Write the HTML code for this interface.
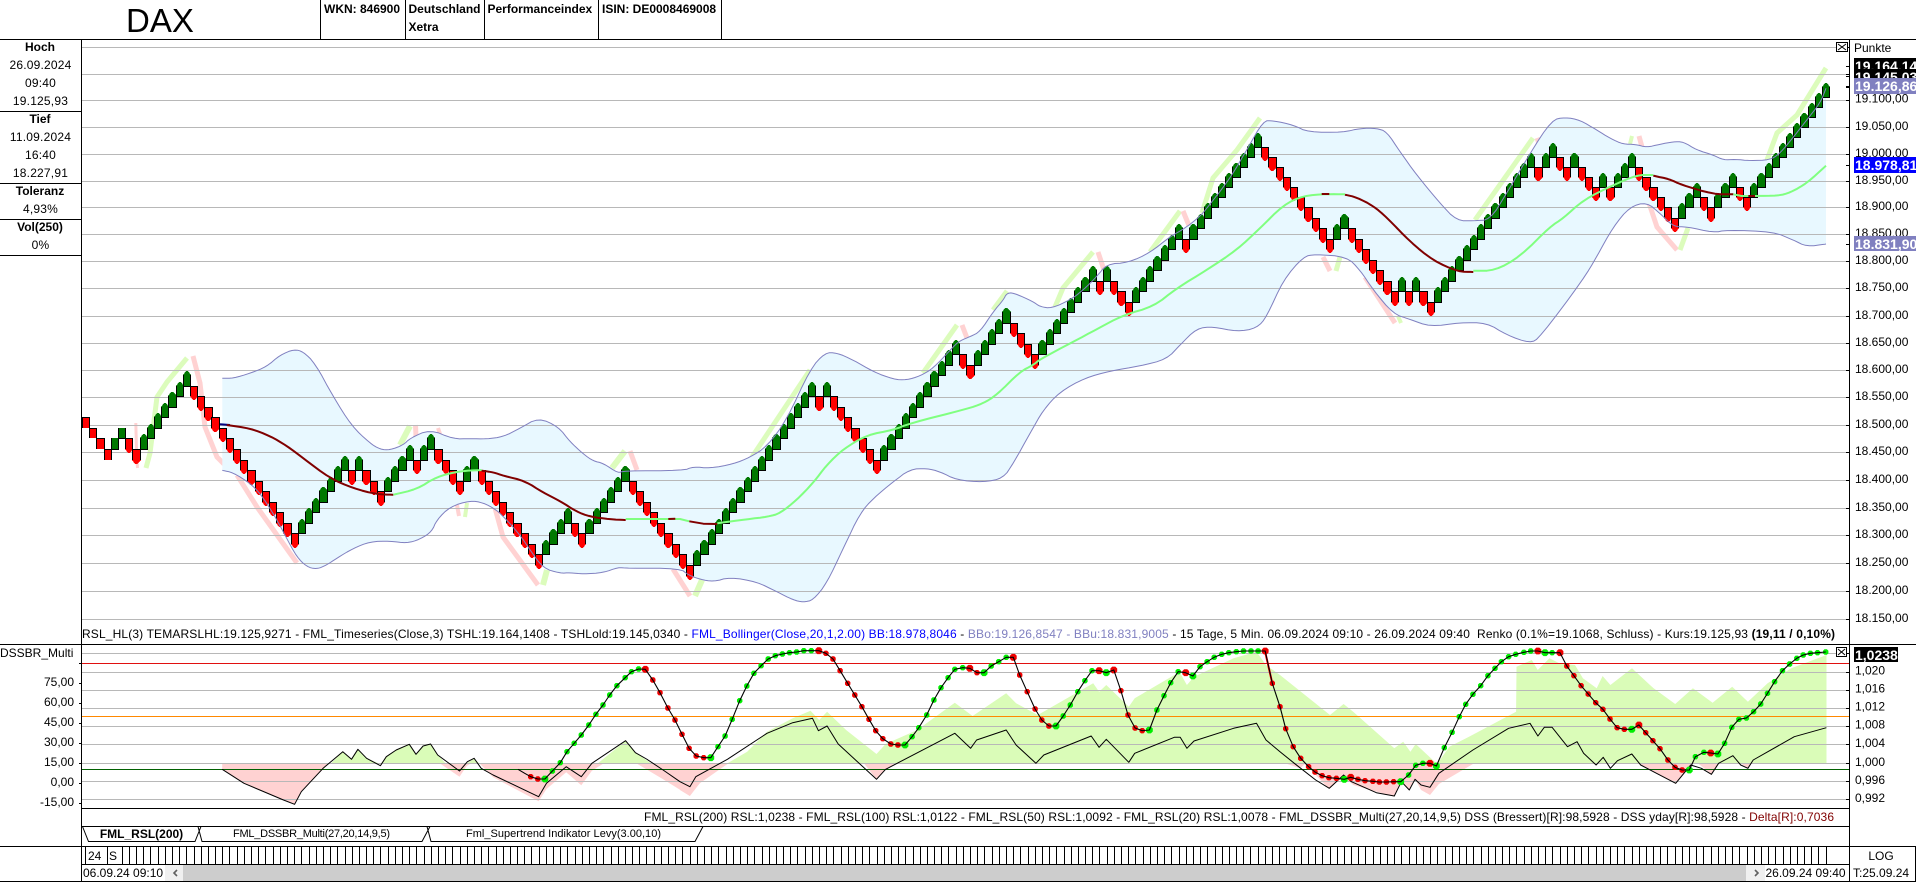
<!DOCTYPE html>
<html lang="de">
<head>
<meta charset="utf-8">
<title>DAX</title>
<style>
html,body{margin:0;padding:0;background:#fff;width:1916px;height:882px;overflow:hidden}
svg{display:block}
text{font-family:"Liberation Sans",Arial,sans-serif;font-size:12px;fill:#000;white-space:pre}
.b{font-weight:bold}
.m{text-anchor:middle}
.e{text-anchor:end}
.w{font-size:14px;font-weight:bold;fill:#fff}
.s{letter-spacing:.2px}
</style>
</head>
<body>
<svg xmlns="http://www.w3.org/2000/svg" width="1916" height="882" viewBox="0 0 1916 882">
<defs>
<clipPath id="mc"><rect x="82" y="40" width="1767" height="604"/></clipPath>
<clipPath id="sc"><rect x="82" y="645" width="1767" height="163"/></clipPath>
</defs>
<rect width="1916" height="882" fill="#fff"/>
<g id="c"></g>

<!-- header -->
<text x="126" y="32" style="font-size:33px">DAX</text>
<text x="324" y="13" class="b">WKN: 846900</text>
<text x="408.5" y="13" class="b">Deutschland</text>
<text x="408.5" y="31" class="b">Xetra</text>
<text x="487.5" y="13" class="b">Performanceindex</text>
<text x="602" y="13" class="b">ISIN: DE0008469008</text>

<!-- left panel -->
<text x="40" y="51" class="b m">Hoch</text>
<text x="40.5" y="69" class="m s">26.09.2024</text>
<text x="40.5" y="87" class="m s">09:40</text>
<text x="40.5" y="105" class="m s">19.125,93</text>
<text x="40" y="123" class="b m">Tief</text>
<text x="40.5" y="141" class="m s">11.09.2024</text>
<text x="40.5" y="159" class="m s">16:40</text>
<text x="40.5" y="177" class="m s">18.227,91</text>
<text x="40" y="195" class="b m">Toleranz</text>
<text x="40.5" y="213" class="m s">4,93%</text>
<text x="40" y="231" class="b m">Vol(250)</text>
<text x="40.5" y="249" class="m s">0%</text>

<!-- main axis -->
<text x="1854" y="52">Punkte</text>
<text x="1855" y="102.5">19.100,00</text>
<text x="1855" y="130">19.050,00</text>
<text x="1855" y="157">19.000,00</text>
<text x="1855" y="184">18.950,00</text>
<text x="1855" y="210">18.900,00</text>
<text x="1855" y="237">18.850,00</text>
<text x="1855" y="264">18.800,00</text>
<text x="1855" y="291">18.750,00</text>
<text x="1855" y="319">18.700,00</text>
<text x="1855" y="346">18.650,00</text>
<text x="1855" y="373">18.600,00</text>
<text x="1855" y="400">18.550,00</text>
<text x="1855" y="428">18.500,00</text>
<text x="1855" y="455">18.450,00</text>
<text x="1855" y="483">18.400,00</text>
<text x="1855" y="511">18.350,00</text>
<text x="1855" y="538">18.300,00</text>
<text x="1855" y="566">18.250,00</text>
<text x="1855" y="594">18.200,00</text>
<text x="1855" y="622">18.150,00</text>

<rect x="1854" y="58" width="62" height="14" fill="#000"/>
<text x="1855" y="71" class="w">19.164,14</text>
<rect x="1854" y="69" width="62" height="10" fill="#000"/>
<text x="1855" y="82" class="w">19.145,03</text>
<rect x="1854" y="78" width="62" height="16" fill="#8080c0"/>
<text x="1855" y="91" class="w">19.126,86</text>
<rect x="1854" y="157" width="62" height="16" fill="#0000ff"/>
<text x="1855" y="170" class="w">18.978,81</text>
<rect x="1854" y="236" width="62" height="15" fill="#8080c0"/>
<text x="1855" y="249" class="w">18.831,90</text>

<!-- close boxes -->
<rect x="1836.5" y="42.5" width="11" height="9" fill="#fff" stroke="#000"/>
<path d="M1838 44l8 6M1846 44l-8 6" stroke="#000" fill="none"/>
<rect x="1836.5" y="647.5" width="10" height="9" fill="#fff" stroke="#000"/>
<path d="M1838 649l7 6M1845 649l-7 6" stroke="#000" fill="none"/>

<!-- info line -->
<text x="82" y="638" textLength="1753" lengthAdjust="spacing">RSL_HL(3) TEMARSLHL:19.125,9271 - FML_Timeseries(Close,3) TSHL:19.164,1408 - TSHLold:19.145,0340 - <tspan fill="#0000ff" style="fill:#0000ff">FML_Bollinger(Close,20,1,2.00) BB:18.978,8046</tspan> - <tspan style="fill:#8080c0">BBo:19.126,8547 - BBu:18.831,9005</tspan> - 15 Tage, 5 Min. 06.09.2024 09:10 - 26.09.2024 09:40  Renko (0.1%=19.1068, Schluss) - Kurs:19.125,93 <tspan class="b">(19,11 / 0,10%)</tspan></text>

<!-- sub chart labels -->
<text x="0" y="657">DSSBR_Multi</text>
<text x="74" y="686" class="e">75,00</text>
<text x="74" y="706" class="e">60,00</text>
<text x="74" y="726" class="e">45,00</text>
<text x="74" y="746" class="e">30,00</text>
<text x="74" y="766" class="e">15,00</text>
<text x="74" y="786" class="e">0,00</text>
<text x="74" y="806" class="e">-15,00</text>

<rect x="1854" y="647" width="44" height="15" fill="#000"/>
<text x="1855" y="660" class="w">1,0238</text>
<text x="1855" y="674.5">1,020</text>
<text x="1855" y="692.5">1,016</text>
<text x="1855" y="710.5">1,012</text>
<text x="1855" y="728.5">1,008</text>
<text x="1855" y="747">1,004</text>
<text x="1855" y="766">1,000</text>
<text x="1855" y="784">0,996</text>
<text x="1855" y="802">0,992</text>

<!-- legend -->
<text x="644" y="821" textLength="1190" lengthAdjust="spacing">FML_RSL(200) RSL:1,0238 - FML_RSL(100) RSL:1,0122 - FML_RSL(50) RSL:1,0092 - FML_RSL(20) RSL:1,0078 - FML_DSSBR_Multi(27,20,14,9,5) DSS (Bressert)[R]:98,5928 - DSS yday[R]:98,5928 - <tspan style="fill:#800000">Delta[R]:0,7036</tspan></text>

<!-- tabs -->
<path d="M82.5 826.5L88.5 841.5H195L201 826.5M198 826.5L202 841.5H422L430 826.5M427 826.5L431 841.5H695L703 826.5" fill="none" stroke="#000"/>
<text x="141.5" y="838" class="b m">FML_RSL(200)</text>
<text x="233" y="837" style="font-size:11px" textLength="157" lengthAdjust="spacing">FML_DSSBR_Multi(27,20,14,9,5)</text>
<text x="466" y="837" style="font-size:11px" textLength="195" lengthAdjust="spacing">Fml_Supertrend Indikator Levy(3.00,10)</text>

<!-- time axis -->
<text x="88" y="860">24</text>
<text x="109" y="860">S</text>
<text x="83" y="877">06.09.24 09:10</text>
<text x="1765.5" y="877">26.09.24 09:40</text>
<text x="1881" y="860" class="m">LOG</text>
<text x="1853" y="877">T:25.09.24</text>
</svg>

<script>
(function(){
var o='';
function P(ox,oy,sx,a){var r=[];for(var i=0;i<a.length;i++){r.push((ox+a[i][0]/sx).toFixed(1)+','+(oy+a[i][1]/3).toFixed(1));}return r;}
var z5=function(a){return P(70,330,3,a)},z6=function(a){return P(560,300,3,a)},z7=function(a){return P(1040,100,3,a)},
z8=function(a){return P(1440,50,3,a)},z12=function(a){return P(560,120,3,a)},
z9=function(a){return P(70,640,2.529,a)},z10=function(a){return P(680,640,2.529,a)},z11=function(a){return P(1280,640,2.8,a)},z4=function(a){return P(1300,600,2.545,a)};
function hl(y,a,b,c){return '<rect x="'+a+'" y="'+y+'" width="'+(b-a)+'" height="1" fill="'+(c||'#000')+'"/>';}
function vl(x,a,b,c){return '<rect x="'+x+'" y="'+a+'" width="1" height="'+(b-a)+'" fill="'+(c||'#000')+'"/>';}
function pl(p,c,w){return '<polyline points="'+p.join(' ')+'" fill="none" stroke="'+c+'" stroke-width="'+w+'" stroke-linejoin="round"/>';}
function pg(p,c){return '<polygon points="'+p.join(' ')+'" fill="'+c+'"/>';}
/* Chaikin corner cutting for smooth curves; endpoints are preserved */
function sm(p,n){
 var a=p.map(function(s){var t=s.split(',');return [+t[0],+t[1]];});
 for(var k=0;k<(n||2);k++){
  var b=[a[0]];
  for(var i=0;i<a.length-1;i++){
   b.push([a[i][0]*.75+a[i+1][0]*.25,a[i][1]*.75+a[i+1][1]*.25]);
   b.push([a[i][0]*.25+a[i+1][0]*.75,a[i][1]*.25+a[i+1][1]*.75]);
  }
  b.push(a[a.length-1]);a=b;
 }
 return a.map(function(q){return q[0].toFixed(1)+','+q[1].toFixed(1);});
}

var G='#dcfcbc',K='#ffd2d2';
/* main chart */
o+='<g clip-path="url(#mc)">';
var st=[
[G,[[146,468],[150,453],[157,397],[167,382],[187,358]],5],
[K,[[193,356],[200,383],[205,427],[217,457],[224,464]],5],
[K,[[135.8,423],[136.5,450],[137.5,468]],3],
[K,[[237,475],[257,507],[297,563]],5],
[G,[[400,445],[410,426]],6],[K,[[415.5,425],[416,437]],5],[K,[[438,428],[440,434]],4],
[K,[[457,505],[459,516]],4],[G,[[467,503],[465,517]],4],
[K,[[495,508],[503,537],[538,585]],5],[G,[[547,570],[543,585]],6],
[G,[[612,468],[625,451]],6],[K,[[630,451],[637,470]],5],
[K,[[673,569],[690,596]],5],[G,[[702,580],[695,596]],6],
[G,[[752,457],[810,370]],5],
[G,[[923,373],[957,325]],5],[K,[[962,325],[967,338]],5],
[G,[[993,310],[1007,291]],5],
[G,[[1055,307],[1063,288],[1093,252]],5],[K,[[1098,252],[1104,270]],5],
[G,[[1150,252],[1180,211]],5],[K,[[1183,211],[1190,228]],5],
[G,[[1202,213],[1213,178],[1237,150],[1260,118]],5],
[K,[[1323,257],[1330,271]],5],[G,[[1340,257],[1336,271]],5],
[K,[[1365,277],[1395,323]],5],[G,[[1398,316],[1401,323]],4],
[G,[[1475,220],[1533,138]],5],[K,[[1537,138],[1540,146]],5],
[G,[[1632,136],[1630,144]],4],[K,[[1639,136],[1642,147]],5],
[K,[[1649,203],[1657,227],[1677,250]],5],[G,[[1688,228],[1680,250]],5],
[G,[[1767,160],[1777,133],[1797,115],[1826,68]],5]
];
st.forEach(function(s){o+='<polyline points="'+s[1].map(function(p){return p.join(',')}).join(' ')+'" fill="none" stroke="'+s[0]+'" stroke-width="'+s[2]+'"/>';});

var up=sm([].concat(
z5([[457,145],[490,145],[540,130],[590,110],[630,75],[672,58],[700,65],[735,100],[790,200],[845,288],[900,340],[930,358],[960,360],[1000,345],[1020,325],[1080,298],[1150,327],[1200,326],[1250,327],[1300,320],[1350,295],[1405,263],[1465,290]]),
z6([[30,425],[70,462],[100,483],[130,490],[175,520],[190,512],[370,512],[400,500],[450,505],[520,492],[570,472],[620,440],[680,360],[750,208],[795,158],[830,158],[880,180],[940,215],[1000,238],[1040,240],[1080,228],[1120,205],[1180,140],[1200,122],[1230,110],[1260,95],[1300,35],[1330,0]]),
z12([[1340,520],[1360,518],[1420,545]]),
z7([[0,620],[35,625],[90,600],[130,570],[170,530],[200,492],[265,488],[330,458],[390,410],[430,388],[480,350],[520,300],[570,235],[620,150],[670,62],[700,62],[760,75],[805,97],[910,97],[960,85],[1010,85],[1040,95],[1080,155],[1130,225]]),
z8([[0,460],[50,512],[100,512],[150,510],[200,430],[270,310],[335,210],[375,202],[420,210],[470,240],[510,265],[550,283],[585,283],[620,292],[660,283],[700,275],[730,275],[770,300],[820,315],[850,330],[885,328],[930,332],[990,330],[1020,310],[1060,262],[1100,210],[1140,160],[1158,115]])
));
var lo=sm([].concat(
z5([[457,421],[490,428],[540,460],[570,490],[610,550],[650,625],[680,680],[710,710],[740,718],[770,705],[800,685],[850,655],[900,635],[960,633],[1010,640],[1050,628],[1085,605],[1100,570],[1140,530],[1200,512],[1240,518],[1280,540],[1310,570],[1350,615],[1380,660],[1420,715],[1470,730]]),
z6([[30,818],[70,822],[130,818],[175,802],[200,805],[360,805],[385,825],[420,838],[460,845],[510,832],[590,845],[650,875],[700,900],[730,907],[760,900],[800,850],[850,745],[900,640],[940,595],[1000,545],[1050,508],[1100,505],[1140,515],[1190,540],[1270,547],[1330,535],[1360,490],[1410,400],[1450,330],[1500,275]]),
['1085,378','1110,371','1140,366'],
z7([[380,778],[420,735],[470,685],[520,680],[590,695],[650,685],[680,650],[730,540],[790,470],[825,463],[920,470],[960,510],[1000,570],[1060,642],[1110,658],[1170,680],[1260,668],[1340,668],[1400,705],[1470,730],[1500,712]]),
z8([[430,688],[470,620],[520,530],[570,470],[620,457],[660,490],[700,530],[740,530],[820,548],[860,540],[1000,545],[1060,570],[1100,590],[1158,582]])
));
o+=pg(up.concat(lo.slice().reverse()),'#e8f8ff');
[47,74,100,127,154,181,207,234,261,288,316,343,370,397,425,452,480,508,535,563,591,619].forEach(function(y){o+=hl(y,82,1849,'#b8b8b8');});

/* renko bricks */
function Y(L){
 if(L<=-20)return 207+(L+20)*9.975;
 if(L<=0)return 417.3+L*10.515;
 return 417.3+L*10.55;
}
var runs=[['d',3],['u',2],['d',2],['u',7],['d',15],['u',7],['d',1],['u',1],['d',3],['u',4],['d',1],['u',2],['d',4],['u',2],['d',9],['u',4],['d',2],['u',6],['d',9],['u',17],['d',1],['u',1],['d',7],['u',11],['d',2],['u',5],['d',4],['u',8],['d',1],['u',1],['d',3],['u',7],['d',1],['u',10],['d',10],['u',2],['d',7],['u',1],['d',1],['u',1],['d',2],['u',14],['d',1],['u',2],['d',2],['u',1],['d',3],['u',1],['d',1],['u',3],['d',6],['u',3],['d',2],['u',3],['d',2],['u',11]];
var seq=[['d',0]],L=0;
runs.forEach(function(r){for(var k=0;k<r[1];k++){L+=(r[0]=='d'?1:-1);seq.push([r[0],L]);}});
var b='<g shape-rendering="crispEdges">';
seq.forEach(function(s,i){
 var c=85.67+7.19*i,l=Math.round(c-3.6),r=Math.round(c+3.6)+1,cx=Math.floor((l+r)/2),T=Math.round(Y(s[1])),B=Math.round(Y(s[1]+1)),tip=i>=6?4:0;
 if(s[0]=='u'){
  b+='<path d="M'+l+' '+T+'L'+(cx-1)+' '+(T-tip)+'H'+(cx+1)+'L'+r+' '+T+'V'+B+'H'+l+'Z" fill="#007800"/>';
  b+='<path d="M'+(l+.5)+' '+T+'V'+(B+.5)+'H'+(r-.5)+'V'+T+'" fill="none" stroke="#000"/>';
 }else{
  b+='<path d="M'+l+' '+T+'H'+r+'V'+B+'L'+(cx+1)+' '+(B+tip)+'H'+(cx-1)+'L'+l+' '+B+'Z" fill="#ff0000"/>';
  b+='<path d="M'+(l+.5)+' '+B+'V'+(T+.5)+'H'+(r-.5)+'V'+B+'" fill="none" stroke="#000"/>';
 }
});
o+=b+'</g>';

o+=pl(up,'#8080c0',1)+pl(lo,'#8080c0',1);
var DR='#800000',LG='#80ff80';
o+=pl(z5([[450,283],[480,285]]),'#000080',2);
o+=pl(sm(z5([[470,285],[540,295],[600,318],[650,347],[700,385],[780,445],[850,475],[920,493],[970,494]])),DR,2);
o+=pl(sm(z5([[970,494],[1040,478],[1100,440],[1170,423],[1235,420]])),LG,2);
o+=pl(sm(z5([[1235,422],[1270,427],[1300,437],[1365,453],[1420,488]]).concat(z6([[0,603],[50,635],[90,650],[150,658],[197,660]]))),DR,2);
o+=pl(z6([[197,657],[325,657],[360,657],[388,664]]),LG,2);
o+=pl(z6([[325,657],[346,656]]),DR,2);
o+=pl(z6([[388,664],[430,671],[472,672]]),DR,2);
o+=pl(sm(z6([[472,670],[560,658],[625,650],[660,640],[710,600],[760,548],[800,495],[850,447],[920,405],[1000,390],[1050,370],[1220,327],[1270,310],[1310,285],[1380,215],[1420,195]]).concat(z7([[0,778],[100,725],[170,688],[250,645],[340,620],[410,565],[500,510],[590,450],[660,385],[730,315],[790,287],[860,282],[915,283]]))),LG,2);
o+=pl(z7([[845,282],[868,282]]),DR,2);
o+=pl(sm(z7([[915,284],[950,292],[1000,318],[1040,352],[1110,425],[1180,482],[1255,515],[1300,516]])),DR,2);
o+=pl(sm(z8([[100,662],[165,662],[240,620],[330,530],[370,505],[430,450],[520,405],[590,375],[640,375]])),LG,2);
o+=pl(sm(z8([[640,377],[690,388],[720,403],[820,433],[880,433]])),DR,2);
o+=pl(z8([[880,433],[905,438],[925,438]]),LG,2);
o+=pl(z8([[925,438],[945,438]]),DR,2);
o+=pl(sm(z8([[945,438],[1015,437],[1050,428],[1100,400],[1158,347]])),LG,2);
o+='</g>';

/* sub chart */
o+='<g clip-path="url(#sc)">';
var GF='#dafcb8',PF='#ffd2d2';
[
z9([[385,370],[385,388],[440,430],[540,480],[568,493],[585,455],[655,370]]),
z9([[935,370],[985,410],[1003,378],[1015,370]]),
z9([[1035,370],[1070,412],[1185,484],[1205,447],[1255,397],[1293,436],[1320,392],[1350,370]]),
z9([[1432,370],[1500,418],[1568,468],[1568,370]]),
z10([[0,370],[0,450],[25,468],[50,430],[120,372]]),
z10([[465,370],[497,418],[520,388],[545,370]]),
z10([[1530,370],[1568,385]]).concat(z11([[70,372],[138,447],[178,407],[205,435],[320,470],[340,425],[362,450],[378,418],[395,450],[420,465],[445,432],[540,372]])),
z11([[1005,370],[1108,430],[1150,372]]),
z11([[1170,370],[1208,403],[1228,370]]),
z11([[1290,370],[1310,385],[1320,370]])
].forEach(function(p){o+=pg(p,PF);});
[
z9([[660,370],[690,335],[712,358],[728,328],[750,355],[785,372],[800,350],[825,330],[858,313],[875,343],[893,318],[912,312],[930,345],[950,370]]),
z9([[1003,370],[1022,356],[1035,370]]),
z9([[1335,370],[1405,302],[1430,338],[1470,370]]),
z10([[120,370],[170,335],[220,275],[285,235],[330,212],[352,240],[372,215],[420,270],[497,342],[520,312],[600,270],[695,188],[740,228],[825,160],[850,190],[905,225],[1045,130],[1060,155],[1078,135],[1135,200],[1150,175],[1250,105],[1265,100],[1282,135],[1300,110],[1400,55],[1458,35],[1482,75]]).concat(
z11([[0,105],[140,225],[178,192],[205,215],[320,325],[345,305],[365,335],[380,312],[440,372]]),
z4([[380,440],[430,410],[550,335],[551,200],[590,180],[605,210],[635,175],[660,190],[700,195],[720,235],[755,265],[770,228],[790,255],[845,205],[900,265],[955,312],[1000,265],[1050,308],[1100,260],[1140,305],[1190,250],[1250,205],[1340,165],[1340,490]]))
].forEach(function(p){o+=pg(p,GF);});
[653,672,690,708,726,744,763,781,799].forEach(function(y){o+=hl(y,82,1849,'#b8b8b8');});
o+=hl(663,82,1849,'#e01010')+hl(716,82,1849,'#ff8800')+hl(769,82,1849,'#006000');

var A=[].concat(
z9([[385,388],[440,430],[480,450],[540,480],[568,493],[585,455],[640,385],[690,335],[712,358],[728,328],[750,355],[785,377],[800,350],[825,330],[858,313],[875,343],[893,318],[912,312],[930,345],[985,393],[1005,365],[1022,355],[1040,385],[1070,405],[1185,470],[1205,430],[1255,380],[1293,410],[1320,370],[1405,302],[1430,338],[1458,357],[1500,390]]),
z10([[0,425],[25,440],[40,410],[120,358],[220,280],[285,248],[335,235],[350,272],[372,258],[400,312],[497,418],[520,388],[695,280],[735,325],[750,300],[825,270],[850,315],[900,370],[920,345],[1040,288],[1060,322],[1078,298],[1135,367],[1150,340],[1250,292],[1265,292],[1282,325],[1300,303],[1400,265],[1458,250],[1482,300]]),
z11([[0,335],[40,370],[100,420],[138,445],[178,405],[200,425],[270,458],[320,468],[340,425],[362,450],[378,418],[395,435],[420,442],[445,400],[540,330],[640,265],[700,250],[722,288],[740,262],[762,262],[805,320],[832,305],[850,340],[885,375],[905,352],[925,385],[945,362],[985,342],[1010,375],[1108,430],[1150,375],[1180,385],[1208,403],[1228,370],[1268,347],[1290,375],[1310,385],[1325,360],[1440,290],[1530,263]])
);
o+=pl(A,'#000',1);

var g='g',r='r';
var d9=[[1165,410,r],[1183,417,r],[1201,417,g],[1220,393,g],[1240,368,g],[1257,335,g],[1275,310,g],[1293,285,g],[1312,255,g],[1330,223,g],[1348,195,g],[1365,165,g],[1383,137,g],[1404,113,g],[1420,95,g],[1438,87,g],[1455,88,r],[1474,120,r],[1492,158,r],[1512,204,r],[1530,240,r]];
var d10=[[5,283,r],[23,325,r],[41,348,r],[60,353,r],[78,353,g],[96,320,g],[114,288,g],[132,238,g],[151,182,g],[169,138,g],[187,100,g],[205,77,g],[223,57,g],[241,47,g],[259,42,g],[277,38,g],[295,36,g],[313,32,g],[332,32,g],[351,32,r],[369,40,r],[387,57,r],[405,92,r],[424,130,r],[442,165,r],[460,200,r],[478,238,r],[495,272,r],[513,296,r],[533,312,r],[551,315,r],[569,315,g],[587,290,g],[604,263,g],[624,225,g],[642,180,g],[660,143,g],[678,113,g],[695,88,g],[715,83,g],[733,85,r],[751,98,r],[769,98,g],[787,78,g],[806,65,g],[825,52,g],[843,52,r],[859,105,r],[878,155,r],[898,207,r],[915,240,r],[933,258,r],[951,258,g],[969,228,g],[987,195,g],[1006,155,g],[1024,122,g],[1042,92,g],[1060,92,r],[1078,98,g],[1097,90,r],[1115,152,r],[1133,225,r],[1151,264,r],[1169,272,r],[1187,270,g],[1206,210,g],[1224,167,g],[1241,128,g],[1260,95,g],[1279,98,r],[1297,108,g],[1315,80,g],[1333,65,g],[1351,52,g],[1370,43,g],[1388,38,g],[1407,35,g],[1425,33,g],[1444,33,g],[1462,33,g],[1480,33,r],[1498,130,r]];
var d11=[[0,200,r],[16,266,r],[37,320,r],[58,355,r],[80,380,r],[98,396,r],[118,407,r],[137,413,r],[158,415,r],[180,418,g],[198,412,r],[218,418,r],[238,422,r],[260,424,r],[278,426,r],[298,426,r],[318,425,r],[338,425,g],[360,405,g],[380,376,g],[400,370,g],[420,370,r],[438,378,g],[460,323,g],[482,277,g],[502,230,g],[520,193,g],[540,163,g],[562,137,g],[582,107,g],[602,85,g],[620,65,g],[640,50,g],[660,43,g],[683,37,g],[702,33,g],[722,33,r],[742,38,g],[762,38,g],[784,38,r],[803,78,r],[823,107,r],[843,137,r],[863,162,r],[884,188,r],[904,208,r],[924,237,r],[944,263,r],[964,268,r],[985,268,g],[1005,255,r],[1024,278,r],[1044,302,r],[1064,326,r],[1086,360,r],[1106,382,r],[1126,390,r],[1146,390,g],[1163,350,g],[1187,337,g],[1206,339,r],[1226,342,g],[1245,310,g],[1265,262,g],[1285,238,g],[1306,234,g],[1326,215,g],[1346,192,g],[1365,160,g],[1385,125,g],[1407,92,g],[1427,72,g],[1447,55,g],[1465,45,g],[1485,40,g],[1505,38,g],[1528,36,g]];
var D=[];
d9.forEach(function(d){D.push([70+d[0]/2.529,640+d[1]/3,d[2]]);});
d10.forEach(function(d){D.push([680+d[0]/2.529,640+d[1]/3,d[2]]);});
d11.forEach(function(d){D.push([1280+d[0]/2.8,640+d[1]/3,d[2]]);});
var prev=null;
D.forEach(function(d){
 var s=(prev&&prev!=d[2])?3.4:2.7,q=s*.45,c=d[2]==g?'#00ee00':'#ee0000',x=d[0],y=d[1];
 o+='<polygon points="'+[[-s,-q],[-q,-s],[q,-s],[s,-q],[s,q],[q,s],[-q,s],[-s,q]].map(function(v){return (x+v[0]).toFixed(1)+','+(y+v[1]).toFixed(1);}).join(' ')+'" fill="'+c+'"/>';
 prev=d[2];
});
var lineB=z9([[1133,388],[1150,400]]).concat(D.map(function(d){return d[0].toFixed(1)+','+d[1].toFixed(1);}));
o+=pl(z10([[1480,36],[1498,130]]),'#ff0000',2);
o+=pl(lineB,'#000',1.1);
o+='</g>';

/* time axis and scrollbar */
o+='<rect x="165" y="865" width="18" height="16" fill="#f0f0f0"/><rect x="183" y="865" width="1563" height="16" fill="#cdcdcd"/><rect x="1746" y="865" width="19" height="16" fill="#f0f0f0"/>';
o+='<path d="M177 870l-3 3 3 3M1755 870l3 3-3 3" fill="none" stroke="#606060" stroke-width="1.6"/>';
for(var i=5;i<=242;i++){o+=vl(Math.round(85.67+7.19*i),846,864);}
o+=vl(85,846,864)+vl(107,846,864);

/* frame */
o+=hl(39,0,1916);
[320,405,484,598,721].forEach(function(x){o+=vl(x,0,39);});
[111,183,219,255].forEach(function(y){o+=hl(y,0,81);});
o+=vl(81,39,882)+vl(1849,39,882);
o+=hl(644,0,1916)+hl(808,82,1849)+hl(826,82,1849)+hl(846,0,1916)+hl(864,82,1849)+hl(881,0,1916);
o+=vl(1915,846,882);
/* ticks */
[47,66,74,76,100,127,154,165,181,207,234,244,261,288,316,343,370,397,425,452,480,508,535,563,591,619].forEach(function(y){o+='<rect x="1846" y="'+y+'" width="3" height="1"/>';});
o+='<rect x="1846" y="86" width="3" height="2"/>';
[653,672,690,708,726,744,763,781,799].forEach(function(y){o+='<rect x="1846" y="'+y+'" width="3" height="1"/>';});
[663,683,703,723,743,763,783,803].forEach(function(y){o+='<rect x="79" y="'+y+'" width="2" height="1"/>';});
document.getElementById('c').innerHTML=o;
})();
</script>
</body>
</html>
